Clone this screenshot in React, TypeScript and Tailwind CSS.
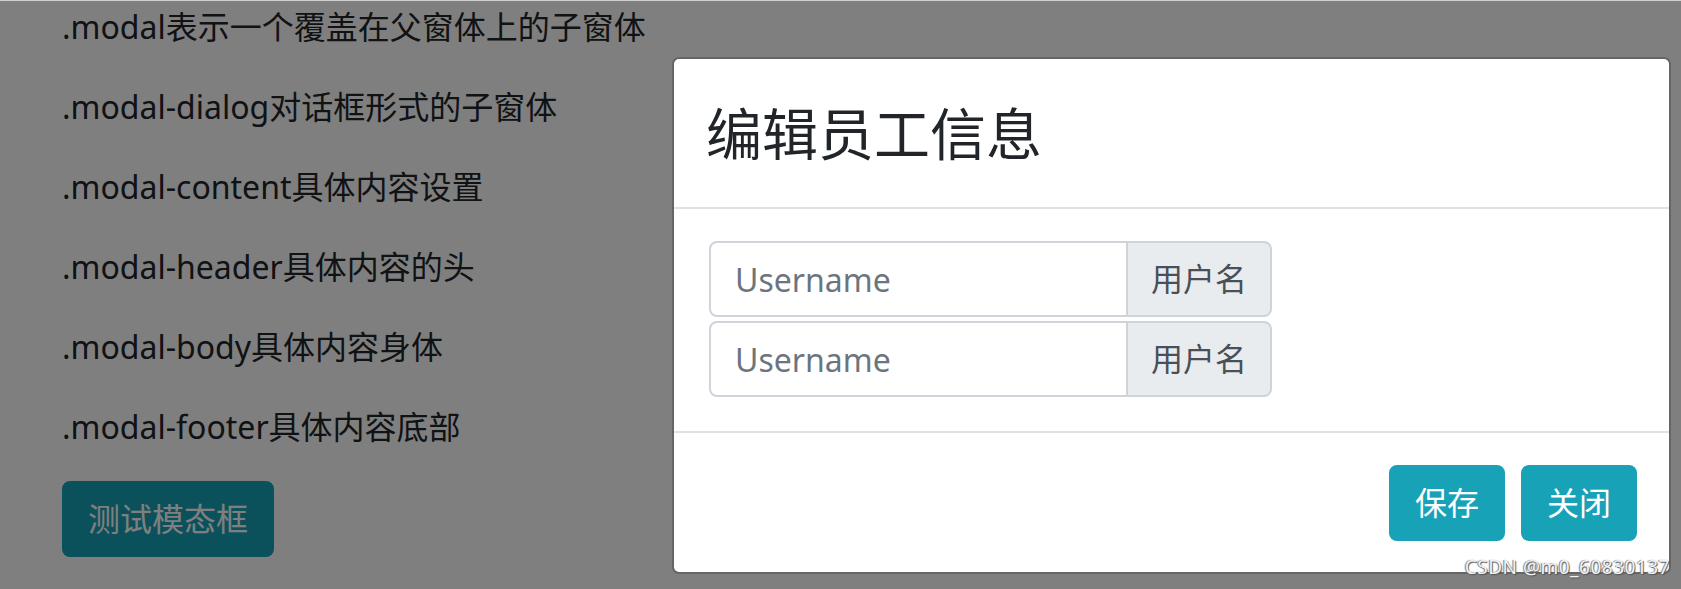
import React from "react";

const lines = [
  ".modal表示一个覆盖在父窗体上的子窗体",
  ".modal-dialog对话框形式的子窗体",
  ".modal-content具体内容设置",
  ".modal-header具体内容的头",
  ".modal-body具体内容身体",
  ".modal-footer具体内容底部",
];

function InputGroup({ className = "" }: { className?: string }) {
  return (
    <div className={`flex h-[76px] w-[563px] ${className}`}>
      <input
        placeholder="Username"
        className="h-full w-[419px] rounded-l-[8px] border-2 border-[#ced4da] bg-white px-[24px] text-[32px] text-[#495057] outline-none placeholder:text-[#6c757d]"
      />
      <div className="-ml-[2px] flex h-full flex-1 items-center justify-center rounded-r-[8px] border-2 border-[#ced4da] bg-[#e9ecef] text-[32px] text-[#495057]">
        用户名
      </div>
    </div>
  );
}

export default function App() {
  return (
    <div className="relative h-[589px] w-[1681px] overflow-hidden bg-white font-['Noto_Sans','Noto_Sans_CJK_SC',sans-serif] text-[#212529]">
      <div className="flex flex-col items-start pl-[62px] pt-[3px]">
        {lines.map((t) => (
          <p key={t} className="mb-[32px] text-[32px] leading-[48px]">
            {t}
          </p>
        ))}
        <button className="-mt-[2px] rounded-[8px] border-2 border-[#17a2b8] bg-[#17a2b8] px-[24px] py-[12px] text-[32px] leading-[48px] text-white">
          测试模态框
        </button>
      </div>

      <div className="absolute inset-0 bg-black/50" />
      <div className="absolute left-0 right-0 top-0 h-px bg-[#cfcfcf]" />

      <div className="absolute left-[672px] top-[57px] w-[999px] rounded-[7px] border-2 border-black/20 bg-white bg-clip-padding">
        <div className="border-b-2 border-[#dee2e6] p-[32px]">
          <h5 className="text-[56px] font-normal leading-[84px] text-[#212529]">编辑员工信息</h5>
        </div>
        <div className="pb-[34px] pl-[35px] pr-[32px] pt-[32px]">
          <InputGroup className="mb-[4px]" />
          <InputGroup />
        </div>
        <div className="flex items-center justify-end border-t-2 border-[#dee2e6] px-[24px] pb-[23px] pt-[24px]">
          <button className="m-[8px] rounded-[8px] border-2 border-[#17a2b8] bg-[#17a2b8] px-[24px] py-[12px] text-[32px] leading-[48px] text-white">
            保存
          </button>
          <button className="m-[8px] rounded-[8px] border-2 border-[#17a2b8] bg-[#17a2b8] px-[24px] py-[12px] text-[32px] leading-[48px] text-white">
            关闭
          </button>
        </div>
      </div>

      <div className="absolute bottom-[12px] right-[11px] font-['Noto_Sans',sans-serif] text-[19px] leading-[20px] tracking-[0.5px] text-[#f2f2f2] [text-shadow:1px_1px_1px_#555,-1px_0_1px_#777]">
        CSDN @m0_60830137
      </div>
    </div>
  );
}
